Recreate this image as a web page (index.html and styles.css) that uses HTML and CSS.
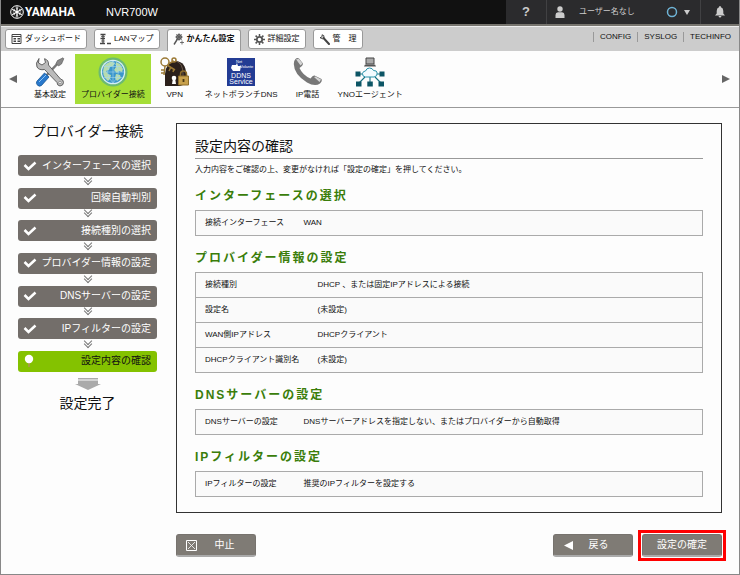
FILE: index.html
```
<!DOCTYPE html>
<html lang="ja">
<head>
    <meta charset="UTF-8">
    <meta name="viewport" content="width=device-width, initial-scale=1.0">
    <title>NVR700W - プロバイダー接続</title>
    <link rel="stylesheet" href="styles.css">
</head>
<body>

    <header class="header">
        <a class="logo" href="#">
            <svg width="14" height="14" viewBox="0 0 14 14" fill="none" stroke="#fff">
                <circle cx="7" cy="7" r="6.3"/>
                <path d="M7 1.5v11M2.2 4.2l9.6 5.6M2.2 9.8l9.6-5.6" stroke-width="1.2"/>
                <path d="M5.6 3l1.4 1.3L8.4 3M5.6 11L7 9.7 8.4 11M2.8 6.3l1.900-.6-.4-2M11.2 7.7l-1.900.6.4 2M2.8 7.7l1.900.6-.4 2M11.2 6.3l-1.900-.6.4-2" stroke-width=".6"/>
            </svg>
            <span>YAMAHA</span>
        </a>
        <span class="model">NVR700W</span>
        <div class="header-menu">
            <a class="help" href="#">?</a>
            <button class="user" type="button">
                <svg width="10" height="12" viewBox="0 0 10 12" fill="#ccc">
                    <circle cx="5" cy="3" r="2.7"/>
                    <path d="M.5 12V9q0-2.500 2.500-2.800h4Q9.500 6.500 9.500 9v3z"/>
                </svg>
                <span class="user-name">ユーザー名なし</span>
                <svg width="12" height="12" viewBox="0 0 12 12" fill="none" stroke="#6fb4d6" stroke-width="1.5">
                    <circle cx="6" cy="6" r="4.5"/>
                </svg>
                <svg width="6" height="6" viewBox="0 0 6 6" fill="#ccc"><path d="M0 1h6L3 6z"/></svg>
            </button>
            <a class="bell" href="#" aria-label="通知">
                <svg width="10" height="12" viewBox="0 0 10 12" fill="#ccc">
                    <path d="M5 0q.9 0 1 1.200Q8.300 2 8.300 5v2.500L10 9.500H0l1.700-2V5Q1.700 2 4 1.200 4.100 0 5 0zM3.500 10h3Q6.200 11.500 5 11.500T3.500 10z"/>
                </svg>
            </a>
        </div>
    </header>

    <div class="tabbar">
        <nav class="tabs">
            <a class="tab" href="#">
                <svg width="11" height="10" viewBox="0 0 11 10" fill="none" stroke="#444">
                    <path d="M1 .5h9v9H1zM1 2.500h9M2.500 4.500h2.500M2.500 6h2.500M2.500 7.500h2.500M6.500 4.500h2.500M6.500 6h2.500M6.500 7.500h2.500"/>
                </svg>
                <span>ダッシュボード</span>
            </a>
            <a class="tab" href="#">
                <svg width="11" height="12" viewBox="0 0 11 12" fill="none" stroke="#444">
                    <path d="M.5 1.500h5M3 1.500v9M.5 5.500H5M0 10.500h5M7 10.500h4" stroke-width="1.3"/>
                    <path d="M1 3.500h4M1 8h4" stroke-width=".7"/>
                </svg>
                <span>LANマップ</span>
            </a>
            <a class="tab active" href="#">
                <svg width="11" height="12" viewBox="0 0 11 12" fill="none" stroke="#555">
                    <circle cx="6" cy="4" r="2.5" fill="#888"/>
                    <path d="M4.500 6L1 11.500" stroke-width="1.4"/>
                    <path d="M6 0v8M2 4h8M3 1l6 6M9 1L3 7" stroke-width=".6"/>
                    <path d="M7 9.500h4M9 7.500v4" stroke-width=".8"/>
                </svg>
                <span>かんたん設定</span>
            </a>
            <a class="tab" href="#">
                <svg width="11" height="11" viewBox="0 0 11 11" fill="none" stroke="#555">
                    <circle cx="5.5" cy="5.5" r="2.7" stroke-width="1.8"/>
                    <path d="M5.500 0v2M5.500 9v2M0 5.500h2M9 5.500h2M1.600 1.600l1.500 1.500M7.900 7.900l1.500 1.500M1.600 9.400l1.500-1.500M7.900 3.100l1.500-1.500" stroke-width="1.5"/>
                </svg>
                <span>詳細設定</span>
            </a>
            <a class="tab" href="#">
                <svg width="11" height="11" viewBox="0 0 11 11" fill="none" stroke="#444">
                    <path d="M4.500 4l5.500 6" stroke-width="2" stroke-linecap="round"/>
                    <path d="M3 .8q2.500.2 2 2.700T1 3.600M1 3.600l1.500-.3L3.200 2 3 .8"/>
                </svg>
                <span>管　理</span>
            </a>
        </nav>
        <nav class="links">
            <a href="#">CONFIG</a>
            <a href="#">SYSLOG</a>
            <a href="#">TECHINFO</a>
        </nav>
    </div>

    <nav class="menu">
        <button class="scroll" type="button" aria-label="前へ">
            <svg width="8" height="8" viewBox="0 0 8 8" fill="#666"><path d="M8 0v8L0 4z"/></svg>
        </button>
        <div class="menu-items">
            <a class="menu-item" href="#">
                <svg width="30" height="30" viewBox="0 0 30 30">
                    <path d="M25 4L10 20" stroke="#777" stroke-width="2.5"/>
                    <path d="M22.500 3.500L28 .8l.8 1L26.500 7l-3 2-2.500-2.500z" fill="#888" stroke="#555" stroke-width=".6"/>
                    <path d="M4 1.500L3.500 6 7 8l3.500-2.500-1-3.800Q14 3 13.500 8l12 14q3 .5 3 3.500t-3.500 3.500q-3-.5-3-3.500L9.500 12.500Q4 13.500 2 10T4 1.500z" fill="#bbb" stroke="#555" stroke-width=".9"/>
                    <circle cx="25" cy="25.5" r="1.2" fill="#fff" stroke="#666" stroke-width=".6"/>
                    <path d="M9.500 16l4.500 4-7.500 8.500q-2 1.500-4-.3t-.6-4z" fill="#2878cc" stroke="#155594" stroke-width=".8"/>
                    <path d="M4 25l7-7" stroke="#8cc4f5"/>
                </svg>
                <span>基本設定</span>
            </a>
            <a class="menu-item active" href="#">
                <svg width="30" height="30" viewBox="0 0 30 30">
                    <circle cx="15" cy="15" r="14.5" fill="#6cba72"/>
                    <circle cx="15" cy="15" r="12.3" fill="#d5eef5"/>
                    <circle cx="15" cy="15" r="11" fill="#3b96cc"/>
                    <path d="M6 9q3-4 8-4.500l3 2-2 2.500-3 1-1 3-3 1 2 3 3 1-1 4-2 2Q3 19 6 9zM18 5l4 2 3 5-1 3-3-1-2 2-3-3 2-3zM18 17l4 1 1 3-4 3-2-3z" fill="#b7dcae"/>
                    <path d="M4 15h22M6 9.500h18M6 20.500h18M15 4v22M15 4q-11 11 0 22M15 4q11 11 0 22" fill="none" stroke="#a5d6ec" stroke-width=".6"/>
                </svg>
                <span>プロバイダー接続</span>
            </a>
            <a class="menu-item" href="#">
                <svg width="30" height="30" viewBox="0 0 30 30">
                    <path d="M5 29V17Q6 5 16 4q10 1 10 13v10l-6 2z" fill="#2b201b"/>
                    <path d="M16 4q7 2 7 13v11" fill="none" stroke="#6b5a4c"/>
                    <circle cx="14" cy="21" r="2.3" fill="#fff"/>
                    <path d="M13 21h2l1 6h-4z" fill="#fff"/>
                    <g fill="none" stroke="#9b7935" stroke-width="1.5">
                        <circle cx="5" cy="5" r="4"/>
                        <circle cx="14" cy="3" r="2"/>
                        <path d="M7 8l8 5M5 9l-1 9M8 7l6-3M4 13H1M4 16H1M11 10l-2 4M14 12l-1 3"/>
                    </g>
                    <path d="M20.500 20v-3q0-3 3-3t3 3v3" fill="none" stroke="#8d6d2b" stroke-width="1.5"/>
                    <path d="M18.500 19h10v9h-10z" fill="#c7a04b" stroke="#8d6d2b"/>
                    <path d="M23.500 22v3" stroke="#4a3814" stroke-width="1.8"/>
                </svg>
                <span>VPN</span>
            </a>
            <a class="menu-item" href="#">
                <svg width="30" height="30" viewBox="0 0 30 30">
                    <path d="M1 1h28v28H1z" fill="#233c94"/>
                    <path d="M6 8h4l1-2 1 3h3l-1 5H7l-2-3z" fill="#fff"/>
                    <text x="10" y="6" class="ddns-brand">Net</text>
                    <text x="14" y="11" class="ddns-brand">Volante</text>
                    <text x="15" y="21" class="ddns-text">DDNS</text>
                    <text x="15" y="27" class="ddns-text">Service</text>
                </svg>
                <span>ネットボランチDNS</span>
            </a>
            <a class="menu-item" href="#">
                <svg width="30" height="30" viewBox="0 0 30 30">
                    <path d="M2.500 2Q4 .5 6 1.500l4 5q0 2-3.500 4.500 3 7 11 10.500 2.500-3.500 4-3l7 3.500q1 2-1.500 4.500-5 3.500-13-1Q1 17.500 .8 7 .8 3.500 2.500 2z" fill="#777"/>
                    <path d="M3 2.300l3-.3 3.500 4.500-2 2zM21 20l1.500-.5 5.500 3-1.500 2.500z" fill="#d5d5d5"/>
                </svg>
                <span>IP電話</span>
            </a>
            <a class="menu-item" href="#">
                <svg width="30" height="30" viewBox="0 0 30 30">
                    <path d="M11 1h8v6h-8z" fill="#aaa" stroke="#444"/>
                    <path d="M10 7.500h10l1 2H9z" fill="#555"/>
                    <path d="M4 17h22M10 20l-6 6M20 20l6 6M15 20v6" stroke="#167080" stroke-width="1.1"/>
                    <path d="M10.500 20Q7 19.500 7.500 16.500q.5-2.500 3-2.500 1-3 4-3t4 2.500q3.500-.2 3.700 2.500.3 3.500-3.200 4z" fill="#f3fbff" stroke="#2a93ab"/>
                    <path d="M.5 14.500h5v5h-5zM24.500 14.500h5v5h-5zM1 24.500h5.500v5H1zM12.300 24.500h5.500v5h-5.500zM23.500 24.500H29v5h-5.500z" fill="#0c5565"/>
                </svg>
                <span>YNOエージェント</span>
            </a>
        </div>
        <button class="scroll" type="button" aria-label="次へ">
            <svg width="8" height="8" viewBox="0 0 8 8" fill="#666"><path d="M0 0v8l8-4z"/></svg>
        </button>
    </nav>

    <div class="content">
        <aside class="sidebar">
            <h1>プロバイダー接続</h1>
            <ol class="steps">
                <li class="step">
                    <svg class="check" width="14" height="10" viewBox="0 0 14 10"><path d="M1.500 4l4 4L12.500 1.500"/></svg>
                    <span>インターフェースの選択</span>
                </li>
                <li class="step">
                    <svg class="check" width="14" height="10" viewBox="0 0 14 10"><path d="M1.500 4l4 4L12.500 1.500"/></svg>
                    <span>回線自動判別</span>
                </li>
                <li class="step">
                    <svg class="check" width="14" height="10" viewBox="0 0 14 10"><path d="M1.500 4l4 4L12.500 1.500"/></svg>
                    <span>接続種別の選択</span>
                </li>
                <li class="step">
                    <svg class="check" width="14" height="10" viewBox="0 0 14 10"><path d="M1.500 4l4 4L12.500 1.500"/></svg>
                    <span>プロバイダー情報の設定</span>
                </li>
                <li class="step">
                    <svg class="check" width="14" height="10" viewBox="0 0 14 10"><path d="M1.500 4l4 4L12.500 1.500"/></svg>
                    <span>DNSサーバーの設定</span>
                </li>
                <li class="step">
                    <svg class="check" width="14" height="10" viewBox="0 0 14 10"><path d="M1.500 4l4 4L12.500 1.500"/></svg>
                    <span>IPフィルターの設定</span>
                </li>
                <li class="step current">
                    <svg width="12" height="14" viewBox="0 0 12 14">
                        <path d="M6 8v5" stroke="#b0905a" stroke-width="1.5"/>
                        <circle cx="6" cy="5" r="4.2" fill="#fff"/>
                    </svg>
                    <span>設定内容の確認</span>
                </li>
            </ol>
            <svg class="finish-arrow" width="26" height="12" viewBox="0 0 26 12" fill="#aaa">
                <path d="M3 0h20v1.500H3zM3 2.500h20V6h3l-13 6L0 6h3z"/>
            </svg>
            <p class="finish">設定完了</p>
        </aside>

        <main class="main">
            <section class="panel">
                <h2>設定内容の確認</h2>
                <p class="lead">入力内容をご確認の上、変更がなければ「設定の確定」を押してください。</p>

                <h3>インターフェースの選択</h3>
                <table>
                    <tr><th>接続インターフェース</th><td>WAN</td></tr>
                </table>

                <h3>プロバイダー情報の設定</h3>
                <table class="wide">
                    <tr><th>接続種別</th><td>DHCP 、または固定IPアドレスによる接続</td></tr>
                    <tr><th>設定名</th><td>(未設定)</td></tr>
                    <tr><th>WAN側IPアドレス</th><td>DHCPクライアント</td></tr>
                    <tr><th>DHCPクライアント識別名</th><td>(未設定)</td></tr>
                </table>

                <h3>DNSサーバーの設定</h3>
                <table>
                    <tr><th>DNSサーバーの設定</th><td>DNSサーバーアドレスを指定しない、またはプロバイダーから自動取得</td></tr>
                </table>

                <h3>IPフィルターの設定</h3>
                <table>
                    <tr><th>IPフィルターの設定</th><td>推奨のIPフィルターを設定する</td></tr>
                </table>
            </section>

            <div class="actions">
                <button class="btn cancel" type="button">
                    <svg width="11" height="11" viewBox="0 0 11 11" fill="none" stroke="#fff">
                        <path d="M.5.5h10v10H.5z"/>
                        <path d="M2 2l7 7M9 2L2 9" stroke-width=".8"/>
                    </svg>
                    <span>中止</span>
                </button>
                <button class="btn" type="button">
                    <svg width="11" height="11" viewBox="0 0 11 11" fill="#fff"><path d="M10 1v9L1 5.500z"/></svg>
                    <span>戻る</span>
                </button>
                <div class="highlight">
                    <button class="btn" type="button"><span>設定の確定</span></button>
                </div>
            </div>
        </main>
    </div>

</body>
</html>
```
FILE: styles.css
```
* {
    box-sizing: border-box;
}
body {
    font-family: "Liberation Sans", "Noto Sans CJK JP", sans-serif;
    font-size: 8px;
    line-height: 10px;
    margin: 0;
    min-height: 100vh;
    color: #111;
    background: #fdfdfd;
    border: 1px solid #888;
    border-top: 0;
}
a {
    color: inherit;
    text-decoration: none;
}
button {
    font: inherit;
    border: 0;
    padding: 0;
    background: none;
    color: inherit;
    cursor: pointer;
}
svg {
    display: block;
    flex: none;
}
h1, h2, h3, p {
    margin: 0;
    font-weight: normal;
}

/* Header */
.header {
    display: flex;
    align-items: center;
    height: 26px;
    padding-left: 9px;
    color: #fff;
    background: #111;
    border-bottom: 2px solid #77756f;
}
.logo {
    display: flex;
    align-items: center;
    gap: 1px;
    width: 96px;
    font: bold 12px/24px Roboto, "Liberation Sans", sans-serif;
}
.model {
    font-size: 11px;
    line-height: 24px;
}
.header-menu {
    display: flex;
    height: 24px;
    margin-left: auto;
    color: #ccc;
    background: #2b2b2d;
}
.help {
    width: 40px;
    font-size: 13px;
    font-weight: bold;
    line-height: 24px;
    text-align: center;
}
.user {
    display: flex;
    align-items: center;
    width: 155px;
    padding: 0 10px 0 8px;
    border-left: 1px solid #414143;
    border-right: 1px solid #414143;
}
.user-name {
    margin: 0 auto 0 14px;
}
.user svg:last-child {
    margin-left: 6px;
}
.bell {
    display: flex;
    align-items: center;
    justify-content: center;
    width: 38px;
}

/* Tabs */
.tabbar {
    display: flex;
    justify-content: space-between;
    height: 25px;
    background: #ccc;
    border-top: 1px solid #eee;
}
.tabs {
    display: flex;
    gap: 7px;
    padding: 2px 0 0 4px;
}
.tab {
    display: flex;
    align-items: center;
    gap: 3px;
    height: 20px;
    padding: 0 5px;
    background: #fff;
    border: 1px solid #999;
    border-radius: 3px;
}
.tab.active {
    height: 22px;
    padding-bottom: 3px;
    font-weight: bold;
    border-bottom: 0;
    border-radius: 3px 3px 0 0;
    background: #fdfdfd;
}
.links {
    display: flex;
    padding: 5px 2px 0 0;
}
.links a {
    height: 10px;
    padding: 0 6px;
    border-left: 1px solid #999;
}

/* Icon menu */
.menu {
    display: flex;
    align-items: center;
    height: 57px;
    padding: 0 9px 0 8px;
    border-bottom: 1px solid #999;
}
.menu-items {
    display: flex;
    flex: 1;
    gap: 3px;
    padding-left: 11px;
}
.menu-item {
    display: flex;
    flex-direction: column;
    align-items: center;
    gap: 3px;
    height: 50px;
    padding: 3px 6px;
    white-space: nowrap;
}
.menu-item.active {
    background: #a5de37;
}
.ddns-brand {
    font-size: 4px;
    fill: #fff;
}
.ddns-text {
    font-size: 7px;
    fill: #fff;
    text-anchor: middle;
}

/* Page body */
.content {
    display: flex;
    gap: 19px;
    padding: 15px 17px 13px;
}
.sidebar {
    flex: none;
    width: 139px;
    text-align: center;
}
.sidebar h1 {
    font-size: 14px;
    line-height: 16px;
}
.steps {
    display: flex;
    flex-direction: column;
    justify-content: space-between;
    height: 217px;
    margin: 16px 0 6px;
    padding: 0;
    list-style: none;
}
.step {
    position: relative;
    display: flex;
    align-items: center;
    justify-content: space-between;
    height: 21px;
    padding: 0 6px 0 5px;
    font-size: 10px;
    color: #fff;
    background: #736e6a;
    border-radius: 3px;
}
/* double chevron between two steps */
.step + .step::before,
.step + .step::after {
    content: "";
    position: absolute;
    left: 50%;
    bottom: 25px;
    width: 5px;
    height: 5px;
    margin-left: -3px;
    border: solid #777;
    border-width: 0 1px 1px 0;
    transform: rotate(45deg);
}
.step + .step::after {
    bottom: 28px;
}
.step.current {
    color: #111;
    background: #84c200;
}
.check {
    fill: none;
    stroke: #fff;
    stroke-width: 2.5;
}
.finish-arrow {
    margin: 0 auto;
}
.finish {
    font-size: 14px;
    line-height: 18px;
    margin-top: 4px;
}

/* Confirmation panel */
.main {
    flex: 1;
}
.panel {
    padding: 12px 18px 15px;
    border: 1px solid #333;
}
.panel h2 {
    font-size: 14px;
    line-height: 20px;
    padding-bottom: 2px;
    border-bottom: 1px solid #999;
}
.lead {
    margin-top: 5px;
    line-height: 12px;
}
.panel h3 {
    font-size: 12px;
    font-weight: bold;
    line-height: 18px;
    letter-spacing: 2px;
    margin: 13px 0 5px;
    color: #3a7d0a;
}
.lead + h3 {
    margin-top: 11px;
}
table {
    width: 100%;
    border-collapse: collapse;
    border: 1px solid #aaa;
    background: #fafafa;
}
tr {
    height: 25px;
    border-top: 1px solid #aaa;
}
th {
    width: 98px;
    padding: 0 0 0 9px;
    font-weight: normal;
    text-align: left;
    white-space: nowrap;
}
.wide th {
    width: 112px;
}
td {
    padding: 0 0 0 10px;
}

/* Buttons */
.actions {
    display: flex;
    align-items: center;
    gap: 5px;
    margin: 17px -4px 0 0;
}
.btn {
    display: flex;
    align-items: center;
    width: 80px;
    height: 23px;
    padding: 0 9px;
    font-size: 10px;
    color: #fff;
    background: #7f7b75;
    border: 1px solid #77736e;
    border-bottom: 2px solid #aaa;
    border-radius: 3px;
}
.btn span {
    flex: 1;
    text-align: center;
}
.cancel {
    margin-right: auto;
}
.cancel span {
    padding-left: 6px;
}
.highlight {
    padding: 1px;
    border: 3px solid #f00;
}
```
